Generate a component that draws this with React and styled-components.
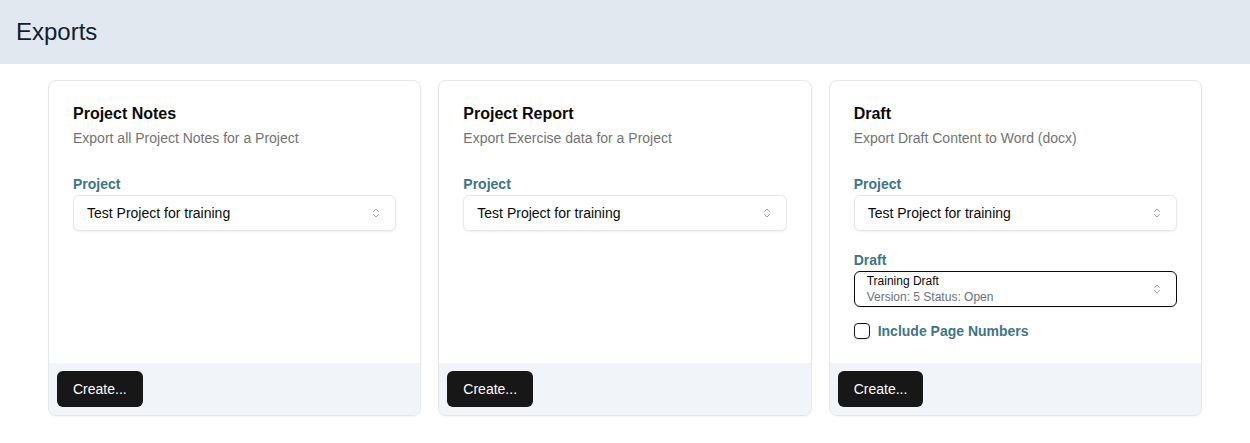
import styled, { createGlobalStyle } from "styled-components";
import { ChevronsUpDown } from "lucide-react";

const GlobalStyle = createGlobalStyle`
  body {
    margin: 0;
    font-family: "Liberation Sans", Arial, sans-serif;
    background: #ffffff;
    color: #0a0a0a;
  }
`;

const exportsList = [
  {
    title: "Project Notes",
    description: "Export all Project Notes for a Project",
  },
  {
    title: "Project Report",
    description: "Export Exercise data for a Project",
  },
  {
    title: "Draft",
    description: "Export Draft Content to Word (docx)",
    draft: true,
  },
];

function Select({ children, active }) {
  return (
    <SelectBox $active={active}>
      <SelectValue>{children}</SelectValue>
      <ChevronsUpDown size={12} strokeWidth={2} color="#9ca3af" />
    </SelectBox>
  );
}

export default function App() {
  return (
    <>
      <GlobalStyle />
      <Header>
        <h1>Exports</h1>
      </Header>
      <Grid>
        {exportsList.map((item) => (
          <Card key={item.title}>
            <CardBody>
              <CardTitle>{item.title}</CardTitle>
              <CardDescription>{item.description}</CardDescription>
              <Form>
                <Field>
                  <Label>Project</Label>
                  <Select>Test Project for training</Select>
                </Field>
                {item.draft && (
                  <>
                    <Field>
                      <Label>Draft</Label>
                      <Select active>
                        <DraftName>Training Draft</DraftName>
                        <DraftMeta>Version: 5 Status: Open</DraftMeta>
                      </Select>
                    </Field>
                    <CheckRow>
                      <Checkbox />
                      <CheckLabel>Include Page Numbers</CheckLabel>
                    </CheckRow>
                  </>
                )}
              </Form>
            </CardBody>
            <CardFooter>
              <Button>Create...</Button>
            </CardFooter>
          </Card>
        ))}
      </Grid>
    </>
  );
}

const Header = styled.header`
  height: 64px;
  background-color: #e2e8f0;
  display: flex;
  align-items: center;
  padding: 0 16px;

  > h1 {
    margin: 0;
    font-size: 24px;
    font-weight: 400;
    color: #0f1e33;
  }
`;

const Grid = styled.main`
  display: grid;
  grid-template-columns: repeat(3, 1fr);
  gap: 17px;
  padding: 16px 48px;
`;

const Card = styled.section`
  display: flex;
  flex-direction: column;
  border: 1px solid #e5e7eb;
  border-radius: 8px;
  background: #ffffff;
  overflow: hidden;
  box-shadow: 0 1px 2px rgba(0, 0, 0, 0.04);
`;

const CardBody = styled.div`
  flex: 1;
  padding: 23px 24px 24px;
`;

const CardTitle = styled.h3`
  margin: 0;
  font-size: 16px;
  line-height: 20px;
  font-weight: 700;
  color: #0a0a0a;
`;

const CardDescription = styled.p`
  margin: 4px 0 0;
  font-size: 14px;
  line-height: 20px;
  color: #737373;
`;

const Form = styled.div`
  display: flex;
  flex-direction: column;
  gap: 19px;
  margin-top: 26px;
`;

const Field = styled.div`
  display: flex;
  flex-direction: column;
  gap: 1px;
`;

const Label = styled.label`
  font-size: 14px;
  line-height: 20px;
  font-weight: 700;
  color: #3d7687;
`;

const SelectBox = styled.div`
  display: flex;
  align-items: center;
  justify-content: space-between;
  box-sizing: border-box;
  min-height: 36px;
  padding: ${(p) => (p.$active ? "1px 13px 1px 12px" : "0 13px 0 13px")};
  border: 1px solid ${(p) => (p.$active ? "#0a0a0a" : "#e5e7eb")};
  border-radius: 6px;
  background: #ffffff;
  box-shadow: 0 1px 2px rgba(0, 0, 0, 0.06);
  font-size: 14px;
  color: #0a0a0a;
`;

const SelectValue = styled.div`
  display: flex;
  flex-direction: column;
`;

const DraftName = styled.span`
  font-size: 12px;
  line-height: 16px;
  color: #0a0a0a;
`;

const DraftMeta = styled.span`
  font-size: 12px;
  line-height: 16px;
  color: #6b7280;
`;

const CheckRow = styled.div`
  display: flex;
  align-items: center;
  gap: 8px;
  height: 16px;
  margin-top: -3px;
`;

const Checkbox = styled.span`
  width: 14px;
  height: 14px;
  border: 1px solid #171717;
  border-radius: 4px;
  box-shadow: 0 1px 2px rgba(0, 0, 0, 0.1);
`;

const CheckLabel = styled.span`
  font-size: 14px;
  line-height: 16px;
  font-weight: 700;
  color: #3d7687;
`;

const CardFooter = styled.div`
  background-color: #f1f5f9;
  padding: 8px;
`;

const Button = styled.button`
  height: 36px;
  padding: 0 16px;
  border: none;
  border-radius: 6px;
  background-color: #171717;
  color: #ffffff;
  font-family: inherit;
  font-size: 14px;
  cursor: pointer;
`;
